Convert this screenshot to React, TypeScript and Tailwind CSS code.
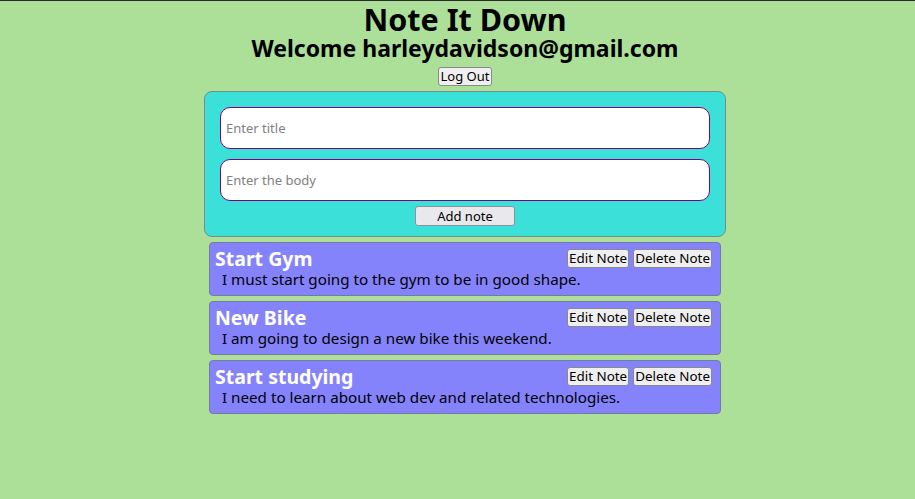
import React from "react";

const notes = [
  { title: "Start Gym", body: "I must start going to the gym to be in good shape." },
  { title: "New Bike", body: "I am going to design a new bike this weekend." },
  { title: "Start studying", body: "I need to learn about web dev and related technologies." },
];

export default function App() {
  return (
    <div
      className="min-h-[499px] w-full bg-[#acdf97] border-t border-[#2a2a2a] pl-[15px] flex flex-col items-center text-black"
      style={{ fontFamily: '"Noto Sans", sans-serif' }}
    >
      <h1 className="text-[30.5px] font-bold leading-[36px]">Note It Down</h1>
      <h2 className="text-[23px] font-bold leading-[22px]">Welcome harleydavidson@gmail.com</h2>
      <button className="mt-[8px] h-[19px] px-[2px] text-[13px] leading-[15px] bg-[#efefef] border border-[#8a8a8a] rounded-[3px]">
        Log Out
      </button>
      <div className="mt-[5px] w-[522px] bg-[#3be0d8] border border-[#7a8a8a] rounded-[8px] px-[15px] pt-[15px] pb-[10px] flex flex-col items-center">
        <input
          className="w-full h-[42px] bg-white border border-[#800080] rounded-[10px] px-[5px] text-[13px] placeholder:text-[#808080] outline-none"
          placeholder="Enter title"
        />
        <input
          className="mt-[10px] w-full h-[42px] bg-white border border-[#800080] rounded-[10px] px-[5px] text-[13px] placeholder:text-[#808080] outline-none"
          placeholder="Enter the body"
        />
        <button className="mt-[5px] w-[100px] h-[20px] text-[13px] leading-[16px] bg-[#e9e9ed] border border-[#8f8f9d] rounded-[3px]">
          Add note
        </button>
      </div>
      <div className="mt-[5px] flex flex-col gap-[5px] w-[512px]">
        {notes.map((n) => (
          <div
            key={n.title}
            className="h-[54px] bg-[#8583fc] border border-[#7a7aa0] rounded-[4px] pl-[5px] pr-[8px] pt-[6px] flex flex-col"
          >
            <div className="flex items-start justify-between">
              <span className="text-white font-bold text-[19.5px] leading-[19px]">{n.title}</span>
              <div className="flex gap-[4px]">
                <button className="h-[19px] px-[1px] text-[13.4px] leading-[15px] bg-[#efefef] border border-[#8a8a8a] rounded-[3px]">
                  Edit Note
                </button>
                <button className="h-[19px] px-[1px] text-[13.4px] leading-[15px] bg-[#efefef] border border-[#8a8a8a] rounded-[3px]">
                  Delete Note
                </button>
              </div>
            </div>
            <p className="text-[15.2px] leading-[16px] pl-[7px] mt-[3px]">{n.body}</p>
          </div>
        ))}
      </div>
    </div>
  );
}
